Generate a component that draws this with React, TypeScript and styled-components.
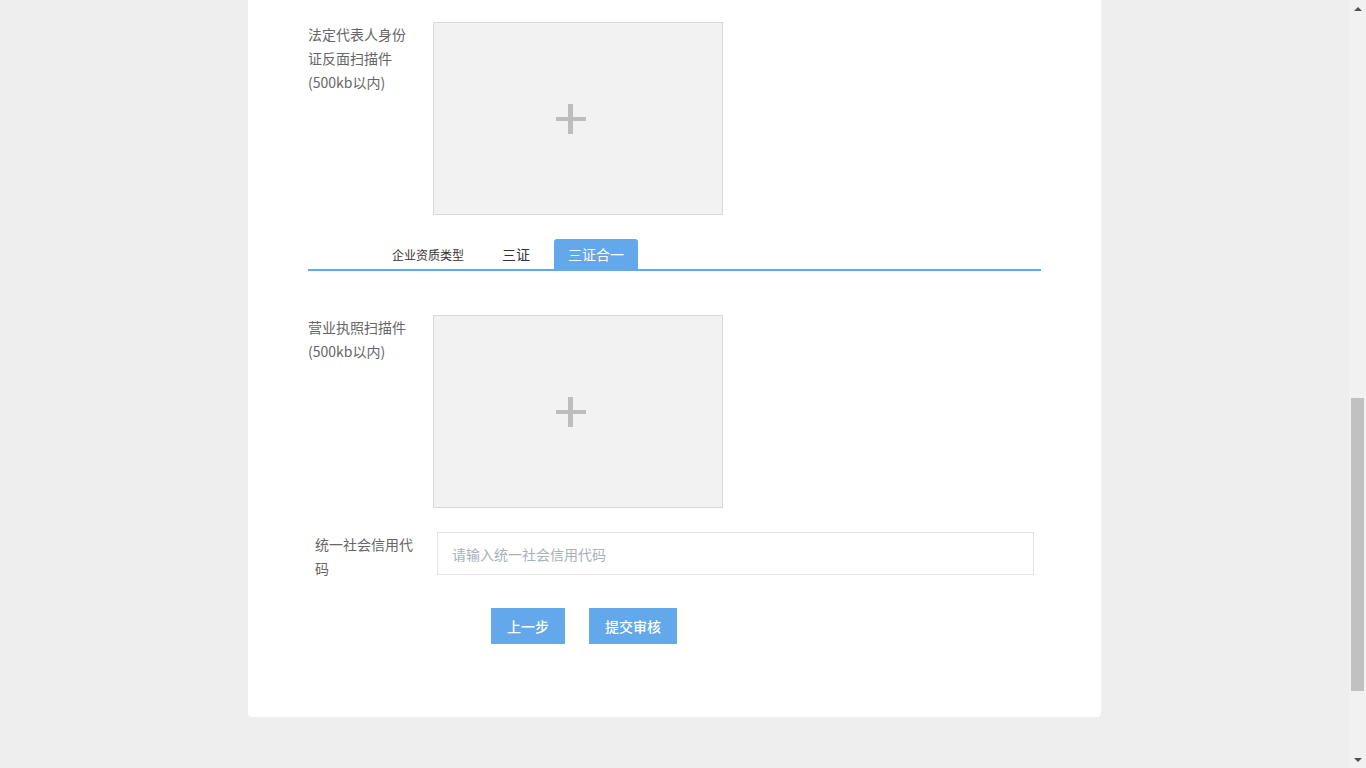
import React, { useLayoutEffect, useRef, useState } from "react";
import styled, { createGlobalStyle } from "styled-components";

const GlobalStyle = createGlobalStyle`
  html, body { height: 100%; }
  body {
    margin: 0;
    overflow: hidden;
    background: #eeeeee;
    font-family: "Noto Sans CJK SC", "Noto Sans", sans-serif;
    font-size: 14px;
    color: #666666;
  }
  * { box-sizing: border-box; }
`;

const Shell = styled.div`
  display: flex;
  height: 100vh;
`;

const Scroller = styled.div`
  flex: 1;
  overflow-y: scroll;
  scrollbar-width: none;
  &::-webkit-scrollbar { display: none; }
`;

const ScrollBar = styled.div`
  width: 17px;
  flex-shrink: 0;
  background: #f1f1f1;
  display: flex;
  flex-direction: column;
`;

const ArrowButton = styled.div`
  height: 17px;
  display: flex;
  align-items: center;
  justify-content: center;
`;

const Arrow = styled.span<{ $down?: boolean }>`
  width: 0;
  height: 0;
  border-left: 4px solid transparent;
  border-right: 4px solid transparent;
  ${(p) =>
    p.$down
      ? "border-top: 4px solid #505050;"
      : "border-bottom: 4px solid #505050;"}
`;

const Track = styled.div`
  flex: 1;
  position: relative;
`;

const Thumb = styled.div`
  position: absolute;
  left: 2px;
  right: 2px;
  background: #c1c1c1;
`;

const Page = styled.div`
  padding: 20px 0 208px;
`;

const Card = styled.div`
  width: 853px;
  margin: 0 auto;
  background: #ffffff;
  border-radius: 4px;
  padding: 30px 60px 73px;
`;

const Title = styled.div`
  font-size: 18px;
  line-height: 30px;
  color: #333333;
  padding-bottom: 14px;
  border-bottom: 1px solid #e8e8e8;
  margin-bottom: 30px;
`;

const Steps = styled.div`
  display: flex;
  justify-content: space-between;
  padding: 0 80px;
  margin-bottom: 80px;
`;

const Step = styled.div<{ $active?: boolean }>`
  display: flex;
  flex-direction: column;
  align-items: center;
  gap: 8px;
  font-size: 13px;
  color: ${(p) => (p.$active ? "#62a8ea" : "#999999")};
`;

const StepDot = styled.span<{ $active?: boolean }>`
  width: 28px;
  height: 28px;
  border-radius: 50%;
  display: flex;
  align-items: center;
  justify-content: center;
  color: #ffffff;
  background: ${(p) => (p.$active ? "#62a8ea" : "#cccccc")};
`;

const FieldRow = styled.div`
  display: flex;
  align-items: flex-start;
  padding: 0 7px;
  margin-bottom: 24px;
`;

const FieldLabel = styled.div`
  width: 100px;
  margin-right: 22px;
  line-height: 24px;
  color: #666666;
`;

const Input = styled.input`
  flex: 1;
  height: 43px;
  border: 1px solid #e1e4e6;
  padding: 0 14px;
  font-family: inherit;
  font-size: 14px;
  color: #333333;
  outline: none;
  &::placeholder { color: #a8b0b8; }
`;

const UploadRow = styled.div`
  display: flex;
  align-items: flex-start;
  margin-bottom: 24px;
`;

const UploadLabel = styled.div`
  width: 110px;
  margin-right: 15px;
  line-height: 24px;
  color: #666666;
`;

const UploadBox = styled.div`
  width: 290px;
  height: 193px;
  background: #f2f2f2;
  border: 1px solid #d9d9d9;
  display: flex;
  align-items: center;
  justify-content: center;
  cursor: pointer;
`;

const Plus = styled.span`
  position: relative;
  width: 30px;
  height: 30px;
  margin-right: 14px;
  &::before, &::after {
    content: "";
    position: absolute;
    background: #bdbdbd;
  }
  &::before { left: 0; right: 0; top: 13px; height: 4px; }
  &::after { top: 0; bottom: 0; left: 12px; width: 5px; }
`;

const TabBar = styled.div`
  display: flex;
  align-items: flex-end;
  gap: 10px;
  padding-left: 70px;
  border-bottom: 2px solid #62a8ea;
  margin-bottom: 44px;
`;

const Tab = styled.div<{ $active?: boolean; $small?: boolean }>`
  height: 30px;
  padding: 0 14px;
  display: flex;
  align-items: center;
  font-size: ${(p) => (p.$small ? "12px" : "14px")};
  color: ${(p) => (p.$active ? "#ffffff" : "#333333")};
  background: ${(p) => (p.$active ? "#62a8ea" : "transparent")};
  border-radius: 3px 3px 0 0;
  cursor: pointer;
`;

const Actions = styled.div`
  display: flex;
  gap: 24px;
  padding-left: 183px;
  margin-top: 28px;
`;

const Button = styled.button`
  height: 36px;
  padding: 0 16px;
  border: none;
  background: #62a8ea;
  color: #ffffff;
  font-family: inherit;
  font-size: 14px;
  font-weight: 500;
  cursor: pointer;
`;

const basicFields = [
  ["企业名称", "请输入企业名称"],
  ["企业类型", "请选择企业类型"],
  ["企业地址", "请输入企业地址"],
  ["联系人", "请输入联系人"],
  ["联系电话", "请输入联系电话"],
  ["电子邮箱", "请输入电子邮箱"],
  ["法定代表人", "请输入法定代表人姓名"],
  ["法定代表人身份证号", "请输入法定代表人身份证号"],
];

export default function App() {
  const scroller = useRef<HTMLDivElement>(null);
  const track = useRef<HTMLDivElement>(null);
  const anchor = useRef<HTMLDivElement>(null);
  const [thumb, setThumb] = useState({ top: 0, height: 0 });

  const updateThumb = () => {
    const s = scroller.current;
    const t = track.current;
    if (!s || !t) return;
    const trackH = t.clientHeight;
    setThumb({
      top: (s.scrollTop / s.scrollHeight) * trackH,
      height: (s.clientHeight / s.scrollHeight) * trackH,
    });
  };

  useLayoutEffect(() => {
    const s = scroller.current;
    const a = anchor.current;
    if (!s || !a) return;
    const offset =
      a.getBoundingClientRect().top - s.getBoundingClientRect().top + s.scrollTop;
    s.scrollTop = offset - 22;
    updateThumb();
  }, []);

  return (
    <>
      <GlobalStyle />
      <Shell>
        <Scroller ref={scroller} onScroll={updateThumb}>
          <Page>
            <Card>
              <Title>企业认证</Title>
              <Steps>
                <Step $active>
                  <StepDot $active>1</StepDot>
                  填写企业信息
                </Step>
                <Step $active>
                  <StepDot $active>2</StepDot>
                  上传资质
                </Step>
                <Step>
                  <StepDot>3</StepDot>
                  等待审核
                </Step>
              </Steps>

              {basicFields.map(([label, ph]) => (
                <FieldRow key={label}>
                  <FieldLabel>{label}</FieldLabel>
                  <Input placeholder={ph} />
                </FieldRow>
              ))}

              <UploadRow>
                <UploadLabel>法定代表人身份证正面扫描件(500kb以内)</UploadLabel>
                <UploadBox>
                  <Plus />
                </UploadBox>
              </UploadRow>

              <UploadRow ref={anchor}>
                <UploadLabel>法定代表人身份证反面扫描件(500kb以内)</UploadLabel>
                <UploadBox>
                  <Plus />
                </UploadBox>
              </UploadRow>

              <TabBar>
                <Tab $small>企业资质类型</Tab>
                <Tab>三证</Tab>
                <Tab $active>三证合一</Tab>
              </TabBar>

              <UploadRow>
                <UploadLabel>营业执照扫描件(500kb以内)</UploadLabel>
                <UploadBox>
                  <Plus />
                </UploadBox>
              </UploadRow>

              <FieldRow>
                <FieldLabel>统一社会信用代码</FieldLabel>
                <Input placeholder="请输入统一社会信用代码" />
              </FieldRow>

              <Actions>
                <Button>上一步</Button>
                <Button>提交审核</Button>
              </Actions>
            </Card>
          </Page>
        </Scroller>
        <ScrollBar>
          <ArrowButton>
            <Arrow />
          </ArrowButton>
          <Track ref={track}>
            <Thumb style={{ top: thumb.top, height: thumb.height }} />
          </Track>
          <ArrowButton>
            <Arrow $down />
          </ArrowButton>
        </ScrollBar>
      </Shell>
    </>
  );
}
